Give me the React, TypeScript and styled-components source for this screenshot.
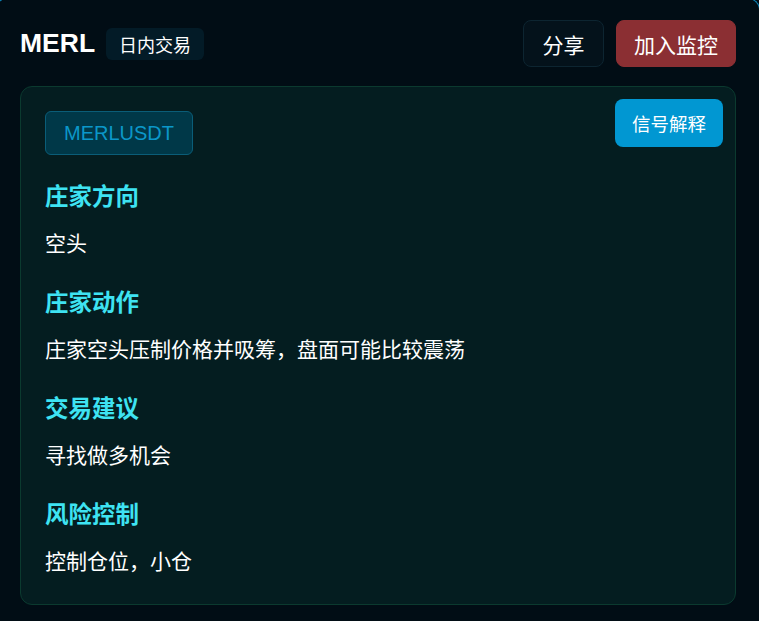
import styled, { createGlobalStyle } from 'styled-components'

const GlobalStyle = createGlobalStyle`
  html, body {
    margin: 0;
    padding: 0;
    background: #010d15;
    overflow: hidden;
  }
  body {
    font-family: "Liberation Sans", "Noto Sans CJK SC", sans-serif;
    color: #ffffff;
  }
`

const sections = [
  { title: '庄家方向', text: '空头' },
  { title: '庄家动作', text: '庄家空头压制价格并吸筹，盘面可能比较震荡' },
  { title: '交易建议', text: '寻找做多机会' },
  { title: '风险控制', text: '控制仓位，小仓' },
]

export default function App() {
  return (
    <>
      <GlobalStyle />
      <Frame>
        <Header>
          <TitleGroup>
            <Symbol>MERL</Symbol>
            <ModeTag>日内交易</ModeTag>
          </TitleGroup>
          <Actions>
            <ActionButton>分享</ActionButton>
            <ActionButton $primary>加入监控</ActionButton>
          </Actions>
        </Header>

        <Card>
          <ExplainButton>信号解释</ExplainButton>
          <PairTag>MERLUSDT</PairTag>
          {sections.map((s) => (
            <Section key={s.title}>
              <SectionTitle>{s.title}</SectionTitle>
              <SectionText>{s.text}</SectionText>
            </Section>
          ))}
        </Card>
      </Frame>
    </>
  )
}

const Frame = styled.div`
  box-sizing: border-box;
  width: calc(100vw + 6px);
  height: calc(100vh + 2px);
  overflow: hidden;
  margin: -2px 0 0 -5px;
  border: 1px solid #0b84b8;
  border-bottom: none;
  border-radius: 12px 12px 0 0;
  padding: 21px 23px 0 24px;
`

const Header = styled.div`
  display: flex;
  align-items: center;
  justify-content: space-between;
  height: 47px;
  margin-bottom: 19px;
`

const TitleGroup = styled.div`
  display: flex;
  align-items: center;
  gap: 11px;
`

const Symbol = styled.div`
  font-family: "Liberation Sans", sans-serif;
  font-size: 26.5px;
  font-weight: 700;
  color: #ffffff;
`

const ModeTag = styled.div`
  display: flex;
  align-items: center;
  height: 32px;
  padding: 0 13px;
  border-radius: 6px;
  background: #031b27;
  font-family: "Noto Sans CJK SC", sans-serif;
  font-size: 18px;
  color: #ffffff;
`

const Actions = styled.div`
  display: flex;
  gap: 12px;
`

const ActionButton = styled.button<{ $primary?: boolean }>`
  box-sizing: border-box;
  height: 47px;
  padding: 0 ${(p) => (p.$primary ? '17px' : '18.5px')};
  border-radius: 8px;
  border: 1px solid ${(p) => (p.$primary ? '#8b2f33' : '#0d2531')};
  background: ${(p) => (p.$primary ? '#8b2f33' : '#04121b')};
  color: #ffffff;
  font-family: "Noto Sans CJK SC", sans-serif;
  font-size: 21px;
  cursor: pointer;
`

const Card = styled.div`
  position: relative;
  box-sizing: border-box;
  height: 519px;
  padding: 24px 24px 0 24px;
  border: 1px solid #0b3a2f;
  border-radius: 12px;
  background: #041d20;
`

const ExplainButton = styled.button`
  position: absolute;
  top: 12px;
  right: 12px;
  height: 48px;
  padding: 0 17px;
  border: none;
  border-radius: 8px;
  background: #0197d2;
  color: #ffffff;
  font-family: "Noto Sans CJK SC", sans-serif;
  font-size: 18.5px;
`

const PairTag = styled.div`
  display: inline-flex;
  align-items: center;
  box-sizing: border-box;
  height: 44px;
  padding: 0 18px;
  border: 1px solid #0a5d78;
  border-radius: 6px;
  background: #003848;
  color: #0b97c9;
  font-size: 20px;
  margin-bottom: 22px;
`

const Section = styled.div`
  display: flex;
  flex-direction: column;
  gap: 11px;
  margin-bottom: 23px;
`

const SectionTitle = styled.div`
  font-family: "Noto Sans CJK SC", sans-serif;
  font-size: 23.5px;
  font-weight: 700;
  line-height: 36px;
  color: #3ee3f2;
`

const SectionText = styled.div`
  font-family: "Noto Sans CJK SC", sans-serif;
  font-size: 21px;
  line-height: 36px;
  color: #ffffff;
`
